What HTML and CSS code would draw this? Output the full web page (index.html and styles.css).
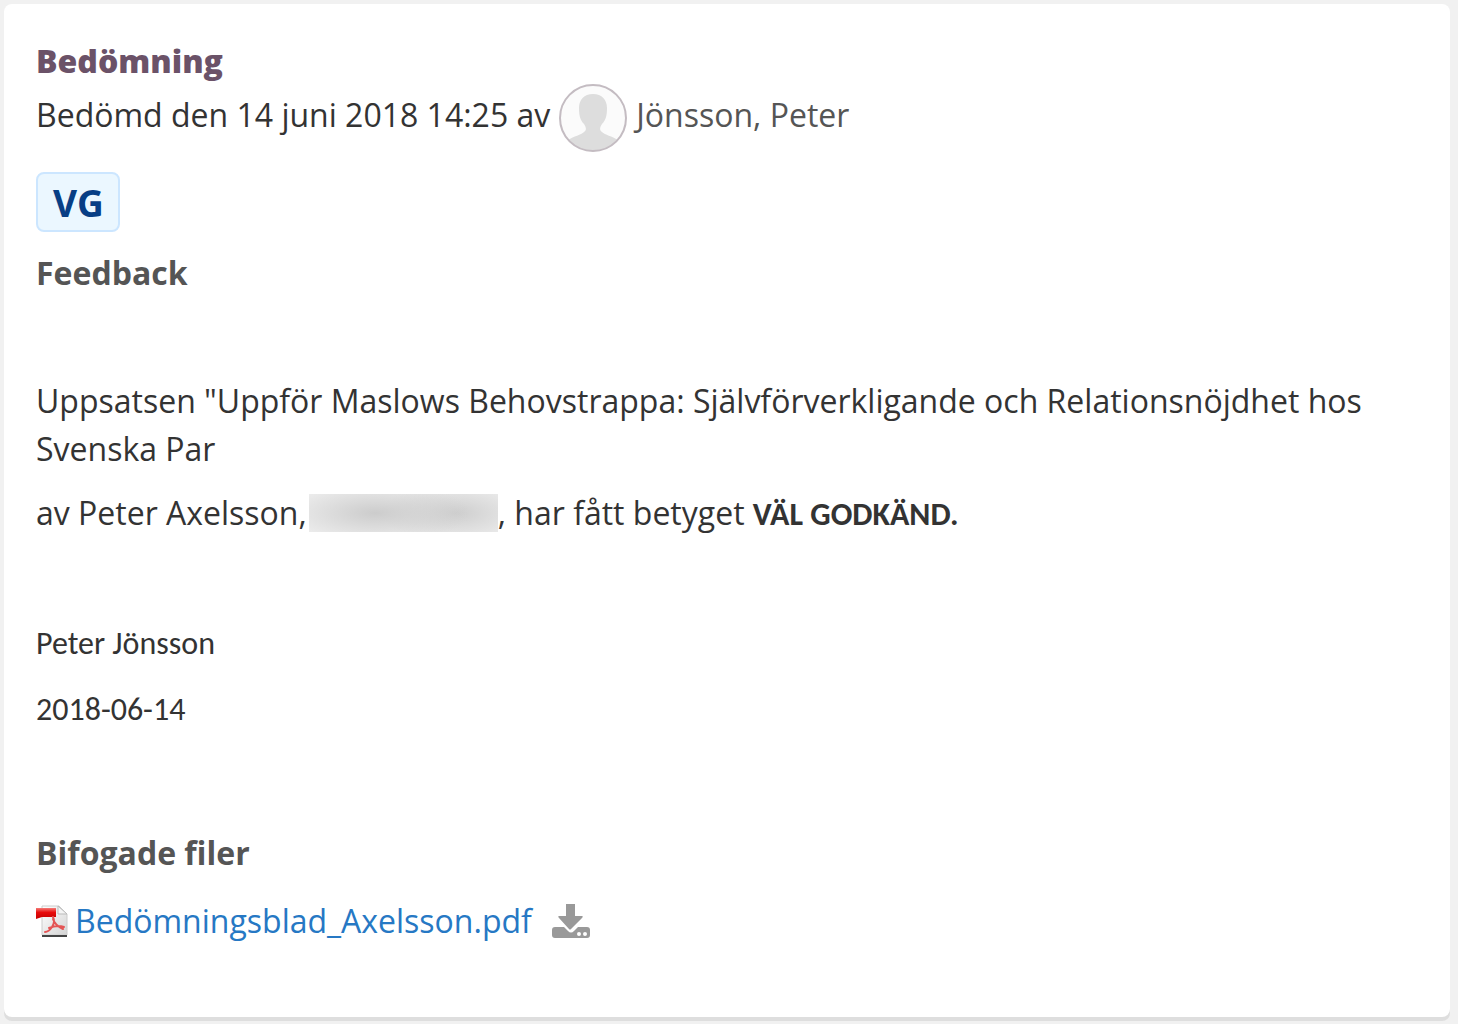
FILE: index.html
```html
<!DOCTYPE html>
<html lang="sv">
<head>
  <meta charset="UTF-8">
  <meta name="viewport" content="width=device-width, initial-scale=1">
  <title>Bedömning</title>
  <link rel="stylesheet" href="styles.css">
</head>
<body>
  <main class="card">
    <h1>Bedömning</h1>
    <div class="assessed">
      <span>Bedömd den 14 juni 2018 14:25 av</span>
      <svg class="avatar" viewBox="0 0 68 68" aria-hidden="true">
        <defs>
          <clipPath id="avatarClip"><circle cx="34" cy="34" r="33"/></clipPath>
        </defs>
        <circle cx="34" cy="34" r="33" fill="#fbfbfb"/>
        <path clip-path="url(#avatarClip)" fill="#dddddd" d="M34 10c-9 0-14 6-14 14 0 7 1 12 5 16 2 3 3 6 0 8-3 3-10 4-16 8v12h50V56c-6-4-13-5-16-8-3-2-2-5 0-8 4-4 5-9 5-16 0-8-5-14-14-14z"/>
        <circle cx="34" cy="34" r="33" fill="none" stroke="#c4bcc2" stroke-width="2"/>
      </svg>
      <a class="person" href="#">Jönsson, Peter</a>
    </div>

    <div class="grade">VG</div>

    <h2>Feedback</h2>
    <div class="feedback">
      <p>Uppsatsen "Uppför Maslows Behovstrappa: Självförverkligande och Relationsnöjdhet hos Svenska Par</p>
      <p>av Peter Axelsson,<span class="redacted"></span>, har fått betyget <strong>VÄL GODKÄND.</strong></p>
    </div>
    <div class="signature">
      <p>Peter Jönsson</p>
      <p>2018-06-14</p>
    </div>

    <h2>Bifogade filer</h2>
    <div class="files">
      <a class="file" href="#">
        <svg class="pdf" viewBox="0 0 32 32" aria-hidden="true">
          <defs>
            <linearGradient id="paper" x1="0" y1="0" x2="1" y2="1">
              <stop offset="0" stop-color="#ffffff"/>
              <stop offset="1" stop-color="#d4d4d4"/>
            </linearGradient>
            <linearGradient id="band" x1="0" y1="0" x2="0" y2="1">
              <stop offset="0" stop-color="#f47a76"/>
              <stop offset="0.4" stop-color="#e80c0c"/>
              <stop offset="1" stop-color="#c40000"/>
            </linearGradient>
          </defs>
          <path d="M6 1h17l8 8v21H6z" fill="url(#paper)" stroke="#cccccc"/>
          <path d="M6 30h25v2H6z" fill="#444444"/>
          <path d="M22 1v8h9z" fill="#f4f4f4" stroke="#bbbbbb"/>
          <path d="M0 3h20v9H6l-6 2z" fill="url(#band)"/>
          <path d="M17 12c2 4 1 7-1 10-2 3-4 5-7 5M13 23c5-2 9-3 15-1M17 14c1 4 4 7 10 10" fill="none" stroke="#e45555" stroke-width="2" stroke-linecap="round"/>
        </svg>
        <span>Bedömningsblad_Axelsson.pdf</span>
      </a>
      <a class="download" href="#" aria-label="Ladda ner">
        <svg viewBox="0 0 38 34" aria-hidden="true">
          <path fill="#999999" d="M14 0h9v12h7c1 0 1 1 0 2L19 25c-1 1-1 1-2 0L7 14c-1-1-1-2 0-2h7z"/>
          <path fill="#999999" fill-rule="evenodd" d="M3 23h9l4 4c2 2 4 2 6 0l4-4h9c2 0 3 1 3 3v5c0 2-1 3-3 3H3c-2 0-3-1-3-3v-5c0-2 1-3 3-3zM27 28a2 2 0 1 0 0 4 2 2 0 0 0 0-4zM33 28a2 2 0 1 0 0 4 2 2 0 0 0 0-4z"/>
        </svg>
      </a>
    </div>
  </main>
</body>
</html>
```

FILE: styles.css
```css
* {
  box-sizing: border-box;
}

body {
  margin: 0;
  padding: 4px 8px 8px 4px;
  background-color: #f1f1f1;
  color: #333333;
  font-family: "Open Sans", sans-serif;
  font-size: 32px;
  line-height: 48px;
}

h1, h2, p {
  margin: 0;
}

a {
  text-decoration: none;
}

.card {
  padding: 34px 32px 72px;
  background-color: #ffffff;
  border-radius: 8px;
  box-shadow: 0 4px 0 #dedede;
}

h1 {
  color: #6b5268;
  font-size: 32px;
  font-weight: 800;
  line-height: 46px;
}

h2 {
  color: #555555;
  font-size: 32px;
  font-weight: 700;
}

.assessed {
  display: flex;
  align-items: flex-start;
  gap: 9px;
  line-height: 62px;
}

.avatar {
  width: 68px;
  height: 68px;
}

.person {
  color: #555555;
}

.grade {
  width: fit-content;
  margin: 20px 0 17px;
  padding: 5px 14px 3px 15px;
  border: 2px solid #cce6ff;
  border-radius: 8px;
  background-color: #ebf7ff;
  color: #073e85;
  font-size: 37px;
  font-weight: 700;
}

.feedback {
  margin-top: 80px;
}

.feedback p + p {
  margin-top: 16px;
}

.redacted {
  display: inline-block;
  width: 189px;
  height: 38px;
  margin: 0 0 6px 2px;
  vertical-align: middle;
  background: radial-gradient(ellipse 50% 80% at 35% 50%, #cccccc, transparent),
    radial-gradient(ellipse 40% 80% at 78% 50%, #cecece, transparent), #eeeeee;
}

.feedback strong,
.signature {
  font-family: Calibri, Carlito, Lato, sans-serif;
  font-size: 32px;
}

.signature {
  margin: 81px 0 95px;
}

.signature p + p {
  margin-top: 18px;
}

.files {
  display: flex;
  align-items: center;
  gap: 20px;
  margin-top: 20px;
}

.file {
  display: flex;
  align-items: center;
  gap: 7px;
  color: #2678c4;
}

.pdf {
  width: 32px;
  height: 32px;
}

.download svg {
  display: block;
  width: 38px;
  height: 34px;
}
```
